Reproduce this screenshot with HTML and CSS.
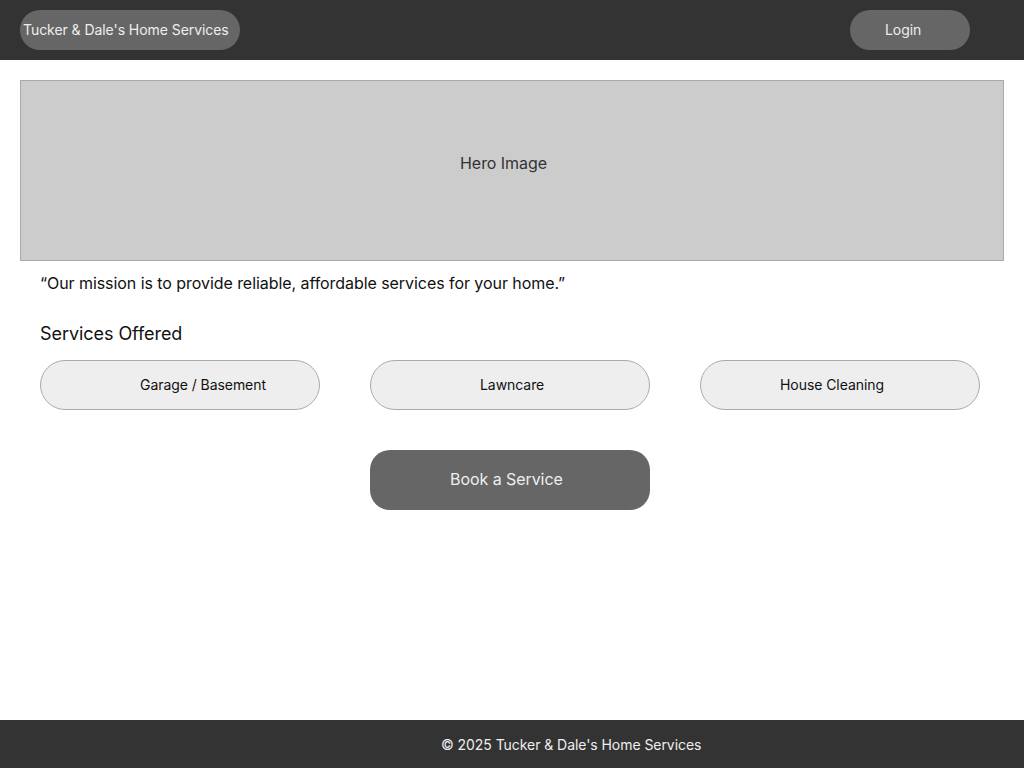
FILE: index.html
```html
<!DOCTYPE html>
<html>
<head>
<meta charset="utf-8">
<link rel="stylesheet" href="styles.css">
</head>
<body>
<header class="topbar">
  <div class="brand">Tucker &amp; Dale's Home Services</div>
  <button class="login">Login</button>
</header>
<main class="content">
  <div class="hero"><span class="hero-label">Hero Image</span></div>
  <p class="mission">“Our mission is to provide reliable, affordable services for your home.”</p>
  <h2 class="section-title">Services Offered</h2>
  <div class="services">
    <div class="service service-garage">Garage / Basement</div>
    <div class="service service-lawn">Lawncare</div>
    <div class="service service-house">House Cleaning</div>
  </div>
  <div class="cta-row">
    <button class="book">Book a Service</button>
  </div>
</main>
<footer class="footer">© 2025 Tucker &amp; Dale's Home Services</footer>
</body>
</html>
```
FILE: styles.css
```css
* { box-sizing: border-box; }
html, body { margin: 0; padding: 0; }
body {
  width: 1024px;
  height: 768px;
  display: flex;
  flex-direction: column;
  font-family: "Inter", "Liberation Sans", sans-serif;
  letter-spacing: -0.06px;
  background: #fff;
  color: #111;
}
.topbar {
  height: 60px;
  flex: 0 0 60px;
  background: #333;
  display: flex;
  align-items: center;
  justify-content: space-between;
  padding: 0 54px 0 20px;
}
.brand {
  width: 220px;
  height: 40px;
  border-radius: 20px;
  background: #666;
  color: #eee;
  font-size: 14px;
  display: flex;
  align-items: center;
  padding: 0 0 1px 3px;
  white-space: nowrap;
}
.login {
  width: 120px;
  height: 40px;
  border-radius: 20px;
  background: #666;
  color: #eee;
  border: none;
  font-family: inherit;
  letter-spacing: inherit;
  font-size: 14px;
  text-align: left;
  padding: 0 0 1px 35px;
}
.content {
  flex: 1;
  padding: 20px 20px 0 20px;
}
.hero {
  height: 181px;
  background: #ccc;
  border: 1px solid #aaa;
  display: flex;
  align-items: center;
  justify-content: center;
  padding: 0 17px 16px 0;
}
.hero-label {
  font-size: 16px;
  color: #333;
}
.mission {
  margin: 12px 0 0 20px;
  font-size: 16px;
  line-height: 20px;
  color: #111;
}
.section-title {
  margin: 30px 0 0 20px;
  font-size: 18px;
  font-weight: 400;
  line-height: 22px;
  color: #111;
}
.services {
  display: flex;
  gap: 50px;
  margin: 15px 0 0 20px;
}
.service {
  width: 280px;
  height: 50px;
  border-radius: 25px;
  background: #eee;
  border: 1px solid #aaa;
  display: flex;
  align-items: center;
  font-size: 14px;
  color: #111;
  padding-bottom: 2px;
}
.service-garage { padding-left: 99px; }
.service-lawn { padding-left: 109px; }
.service-house { padding-left: 79px; }
.cta-row {
  margin: 40px 0 0 350px;
}
.book {
  width: 280px;
  height: 60px;
  border-radius: 20px;
  background: #666;
  color: #eee;
  border: none;
  font-family: inherit;
  letter-spacing: inherit;
  font-size: 16px;
  text-align: left;
  padding: 0 0 3px 80px;
}
.footer {
  height: 48px;
  flex: 0 0 48px;
  background: #333;
  color: #eee;
  font-size: 14px;
  display: flex;
  align-items: center;
  padding-left: 441px;
}
```
